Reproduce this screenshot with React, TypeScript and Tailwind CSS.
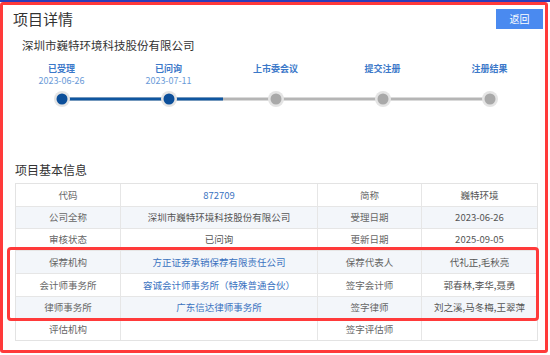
import React from "react";

const font = { fontFamily: '"Noto Sans CJK SC", "Noto Sans", sans-serif' };

const steps = [
  { label: "已受理", date: "2023-06-26" },
  { label: "已问询", date: "2023-07-11" },
  { label: "上市委会议", date: "" },
  { label: "提交注册", date: "" },
  { label: "注册结果", date: "" },
];

type Cell = { t: string; link?: boolean };
const rows: { h: number; cells: Cell[] }[] = [
  { h: 23, cells: [{ t: "代码" }, { t: "872709", link: true }, { t: "简称" }, { t: "巍特环境" }] },
  { h: 22, cells: [{ t: "公司全称" }, { t: "深圳市巍特环境科技股份有限公司" }, { t: "受理日期" }, { t: "2023-06-26" }] },
  { h: 22, cells: [{ t: "审核状态" }, { t: "已问询" }, { t: "更新日期" }, { t: "2025-09-05" }] },
  { h: 23, cells: [{ t: "保荐机构" }, { t: "方正证券承销保荐有限责任公司", link: true }, { t: "保荐代表人" }, { t: "代礼正,毛秋亮" }] },
  { h: 23, cells: [{ t: "会计师事务所" }, { t: "容诚会计师事务所（特殊普通合伙）", link: true }, { t: "签字会计师" }, { t: "郭春林,李华,聂勇" }] },
  { h: 22, cells: [{ t: "律师事务所" }, { t: "广东信达律师事务所", link: true }, { t: "签字律师" }, { t: "刘之溪,马冬梅,王翠萍" }] },
  { h: 22, cells: [{ t: "评估机构" }, { t: "" }, { t: "签字评估师" }, { t: "" }] },
];

export default function App() {
  const centers = [62, 169, 276, 383, 490];
  return (
    <div className="relative w-[550px] h-[355px] bg-white overflow-hidden" style={font}>
      <div className="h-[2px] bg-[#2b3dbb]" />
      {/* header */}
      <div className="flex justify-between items-start pt-[7px]">
        <div className="pl-[13px] text-[15px] leading-[20px] text-[#333]">项目详情</div>
        <button className="mr-[7px] w-[47px] h-[20px] bg-[#4a8af0] text-white text-[10px] leading-[20px] text-center">
          返回
        </button>
      </div>
      <div className="mt-[8px] pl-[22px] text-[11.5px] leading-[16px] text-[#333]">
        深圳市巍特环境科技股份有限公司
      </div>
      {/* timeline */}
      <div className="mt-[10px] ml-[8px] grid grid-cols-[107px_107px_107px_107px_107px]">
        {steps.map((s) => (
          <div key={s.label} className="flex flex-col items-center">
            <div className="text-[9px] leading-[12px] font-bold text-[#3b78c9]">{s.label}</div>
            <div className="text-[9px] leading-[11px] text-[#6a9bd8] h-[11px]">{s.date}</div>
          </div>
        ))}
      </div>
      <svg className="mt-[3px] block" width="550" height="20" viewBox="0 0 550 20">
        <line x1={62} y1={10} x2={490} y2={10} stroke="#b5b5b5" strokeWidth={3} />
        <line x1={62} y1={10} x2={223} y2={10} stroke="#0f56a0" strokeWidth={3} />
        {centers.map((c, i) => (
          <g key={c}>
            <circle cx={c} cy={10} r={8} fill="#e4e4e4" />
            <circle cx={c} cy={10} r={5.5} fill={i < 2 ? "#0c4f9a" : "#a9a9a9"} />
          </g>
        ))}
      </svg>
      <div className="mt-[53px] pl-[15px] text-[12px] leading-[16px] text-[#333]">项目基本信息</div>
      {/* table */}
      <div className="mt-[5px] ml-[15px] w-[523px] border border-[#e3e3e3]">
        {rows.map((r, i) => (
          <div
            key={i}
            className={`grid grid-cols-[105px_197px_104px_1fr] ${i % 2 === 1 ? "bg-[#f3f6fa]" : "bg-white"} ${i < rows.length - 1 ? "border-b border-[#e6e6e6]" : ""}`}
            style={{ height: r.h - (i < rows.length - 1 ? 0 : 1) }}
          >
            {r.cells.map((c, j) => (
              <div
                key={j}
                className={`flex items-center justify-center text-[9.5px] ${j < 3 ? "border-r border-[#e6e6e6]" : ""} ${c.link ? "text-[#3a72bf]" : j % 2 === 0 ? "text-[#666]" : "text-[#555]"}`}
              >
                {c.t}
              </div>
            ))}
          </div>
        ))}
      </div>
      {/* annotations */}
      <div className="absolute left-0 top-[2px] right-[2px] bottom-[2px] border-[3px] border-[#ff3a3a] rounded-[3px] pointer-events-none" />
      <div className="absolute left-[7px] top-[247px] w-[532px] h-[74px] border-[3px] border-[#ff3a3a] rounded-[4px] pointer-events-none" />
    </div>
  );
}
